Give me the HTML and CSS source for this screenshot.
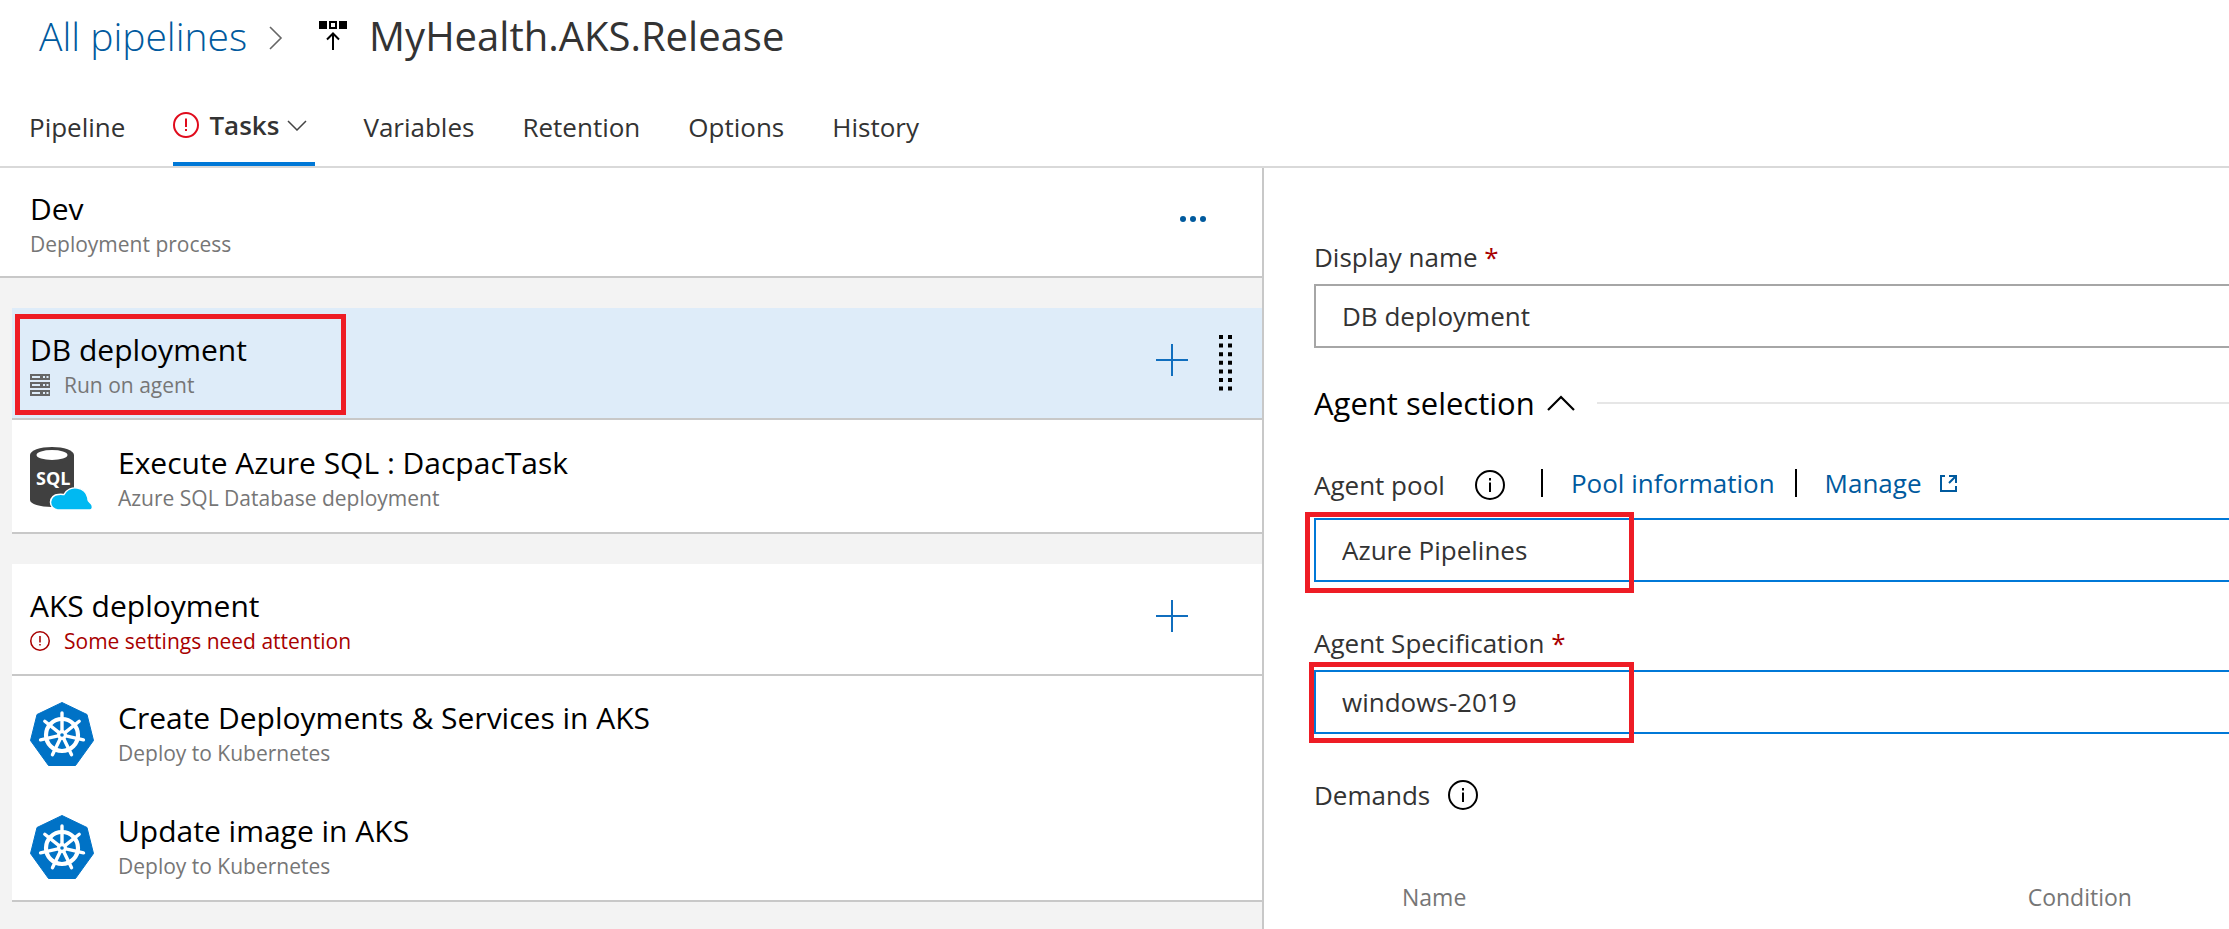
FILE: index.html
```
<!DOCTYPE html>
<html lang="en">
<head>
<meta charset="utf-8">
<title>MyHealth.AKS.Release</title>
<link rel="stylesheet" href="styles.css">
</head>
<body>
<svg class="defs" aria-hidden="true">
  <symbol id="info" viewBox="0 0 30 30"><circle cx="15" cy="15" r="14" fill="none" stroke="currentColor" stroke-width="2"/><path d="M15 12.500V22M15 8v2.500" fill="none" stroke="currentColor" stroke-width="2"/></symbol>
  <symbol id="alert" viewBox="0 0 26 26"><circle cx="13" cy="13" r="12" fill="none" stroke="currentColor" stroke-width="2"/><path d="M13 6.500V15M13 17v2" fill="none" stroke="currentColor" stroke-width="2"/></symbol>
  <symbol id="plus" viewBox="0 0 32 32"><path d="M16 0V32M0 16H32" fill="none" stroke="currentColor" stroke-width="2"/></symbol>
  <symbol id="helm" viewBox="0 0 64 64">
    <path d="M32 0.500 57 12.500 63.500 38.500 45.500 63.500H18.500L.5 38.500 7 12.500Z" fill="#0072c6" stroke="#0072c6" stroke-linejoin="round"/>
    <g fill="none" stroke="#fff" stroke-width="3.400" stroke-linecap="round">
      <circle cx="32" cy="33" r="16" stroke-width="4.200"/>
      <path d="M32 30V11"/>
      <path d="M32 30V11" transform="rotate(51.430 32 33)"/>
      <path d="M32 30V11" transform="rotate(102.860 32 33)"/>
      <path d="M32 30V11" transform="rotate(154.290 32 33)"/>
      <path d="M32 30V11" transform="rotate(205.710 32 33)"/>
      <path d="M32 30V11" transform="rotate(257.140 32 33)"/>
      <path d="M32 30V11" transform="rotate(308.570 32 33)"/>
    </g>
    <circle cx="32" cy="33" r="5" fill="#fff"/><circle cx="32" cy="33" r="1.800" fill="#0072c6"/>
  </symbol>
</svg>
<header class="top">
  <nav class="crumbs" aria-label="Breadcrumb">
    <a class="crumb-link" href="#">All pipelines</a>
    <svg class="crumb-sep" viewBox="0 0 14 24"><path d="M1 1 12 12 1 23" fill="none" stroke="#666" stroke-width="1.600"/></svg>
    <svg class="release-icon" viewBox="0 0 28 30"><path d="M0 0H8V8H0ZM20 0H28V8H20ZM10 0H18V8H10Z"/><path d="M12 2H16V6H12Z" fill="#fff"/><path d="M14 29V13M8 18.500 14 12.500 20 18.500" fill="none" stroke="#000" stroke-width="2"/></svg>
    <h1 class="title">MyHealth.AKS.Release</h1>
  </nav>
  <nav class="tabs" aria-label="Sections">
    <a class="tab" href="#">Pipeline</a>
    <a class="tab tab-active" href="#" aria-current="page"><svg class="tab-alert"><use href="#alert"/></svg>Tasks<svg class="tab-chevron" viewBox="0 0 20 11"><path d="M1 1 10 10 19 1" fill="none" stroke="#444" stroke-width="1.500"/></svg></a>
    <a class="tab" href="#">Variables</a>
    <a class="tab" href="#">Retention</a>
    <a class="tab" href="#">Options</a>
    <a class="tab" href="#">History</a>
  </nav>
</header>
<main class="panes">
  <section class="tasks">
    <div class="row row-process">
      <div class="row-text"><h2 class="name">Dev</h2><p class="sub">Deployment process</p></div>
      <button class="icon-button more" aria-label="More"><svg class="dots" viewBox="0 0 27 6"><circle cx="3" cy="3" r="3"/><circle cx="13" cy="3" r="3"/><circle cx="23" cy="3" r="3"/></svg></button>
    </div>
    <div class="group">
      <div class="row row-selected">
        <div class="row-text"><h2 class="name">DB deployment</h2>
          <p class="sub"><svg class="sub-icon server" viewBox="0 0 20 22"><path d="M0 0H20V6H0ZM0 8H20V14H0ZM0 16H20V22H0Z" fill="#666"/><path d="M2 2H10V4H2ZM2 10H10V12H2ZM2 18H10V20H2ZM13 2H15V4H13ZM13 10H15V12H13ZM13 18H15V20H13ZM16.500 2H18.500V4H16.500ZM16.500 10H18.500V12H16.500ZM16.500 18H18.500V20H16.500Z" fill="#deecf9"/></svg>Run on agent</p></div>
        <button class="icon-button add" aria-label="Add a task to DB deployment"><svg class="plus"><use href="#plus"/></svg></button>
        <svg class="grip" viewBox="0 0 14 56"><path d="M2 0V56M11 0V56" fill="none" stroke="#000" stroke-width="4" stroke-dasharray="4 4.600"/></svg>
        <span class="mark mark-job"></span>
      </div>
      <div class="row row-last">
        <svg class="task-icon" viewBox="0 0 64 64"><path d="M0 8V53C0 57 10 60 22 60S44 57 44 53V8Z" fill="#404040"/><ellipse cx="22" cy="8" rx="22" ry="8" fill="#404040"/><ellipse cx="22" cy="8" rx="15.500" ry="5" fill="#fff"/><text class="sql" x="6" y="38">SQL</text><path d="M28 63A7.500 7.500 0 0 1 28.500 47.500C31 47 33 47.500 34 47.500A13 13 0 0 1 58 51C57 55 61 55 62 58S62 63 60 63Z" fill="#00b9f2" stroke="#fff" stroke-width="1.500"/></svg>
        <div class="row-text"><h3 class="name">Execute Azure SQL : DacpacTask</h3><p class="sub">Azure SQL Database deployment</p></div>
      </div>
    </div>
    <div class="group">
      <div class="row">
        <div class="row-text"><h2 class="name">AKS deployment</h2>
          <p class="sub sub-error"><svg class="sub-icon"><use href="#alert"/></svg>Some settings need attention</p></div>
        <button class="icon-button add add-end" aria-label="Add a task to AKS deployment"><svg class="plus"><use href="#plus"/></svg></button>
      </div>
      <div class="row row-plain">
        <svg class="task-icon"><use href="#helm"/></svg>
        <div class="row-text"><h3 class="name">Create Deployments &amp; Services in AKS</h3><p class="sub">Deploy to Kubernetes</p></div>
      </div>
      <div class="row row-last">
        <svg class="task-icon"><use href="#helm"/></svg>
        <div class="row-text"><h3 class="name">Update image in AKS</h3><p class="sub">Deploy to Kubernetes</p></div>
      </div>
    </div>
  </section>
  <form class="detail">
    <div class="label-line"><label for="display-name">Display name <span class="req">*</span></label></div>
    <div class="field"><input class="box" id="display-name" type="text" value="DB deployment"></div>
    <div class="section-head"><h2 class="section-title">Agent selection</h2><svg class="section-chevron" viewBox="0 0 28 16"><path d="M1 15 14 2 27 15" fill="none" stroke="#000" stroke-width="2.200"/></svg><span class="rule"></span></div>
    <div class="label-line label-pool">
      <label for="pool">Agent pool</label><svg class="info info-pool"><use href="#info"/></svg>
      <span class="links"><span class="bar"></span><a class="link" href="#">Pool information</a><span class="bar"></span><a class="link" href="#">Manage<svg class="external" viewBox="0 0 17 17"><path d="M5 1H1V16H16V11M9 1H16V8M16 1 9 8" fill="none" stroke="currentColor" stroke-width="2"/></svg></a></span>
    </div>
    <div class="field"><select class="box box-active" id="pool"><option>Azure Pipelines</option></select><span class="mark mark-pool"></span></div>
    <div class="label-line label-next"><label for="spec">Agent Specification <span class="req">*</span></label></div>
    <div class="field"><select class="box box-active" id="spec"><option>windows-2019</option></select><span class="mark mark-spec"></span></div>
    <div class="label-line label-next"><span>Demands</span><svg class="info"><use href="#info"/></svg></div>
    <table class="demands"><thead><tr><th class="col-name" scope="col">Name</th><th class="col-condition" scope="col">Condition</th></tr></thead></table>
  </form>
</main>
</body>
</html>
```
FILE: styles.css
```
* { box-sizing: border-box; }
html, body { height: 100%; }
body {
  margin: 0;
  display: flex;
  flex-direction: column;
  overflow: hidden;
  background: #fff;
  color: #333;
  font: 26px/36px "Open Sans", "Noto Sans", sans-serif;
}
h1, h2, h3, p { margin: 0; font-weight: 400; }
a { color: inherit; text-decoration: none; }
svg { display: block; flex: none; }
.defs { width: 0; height: 0; position: absolute; }

.top { border-bottom: 2px solid #d9d9d9; }
.crumbs { display: flex; align-items: center; padding: 8px 39px 0; height: 64px; }
.crumb-link { font-size: 39px; line-height: 56px; font-weight: 300; color: #005a9e; }
.crumb-sep { width: 14px; height: 24px; margin: 4px 36px 0 22px; }
.release-icon { width: 28px; height: 30px; margin-right: 22px; }
.title { font-size: 40px; line-height: 56px; }

.tabs { display: flex; gap: 48px; height: 102px; padding: 0 29px; }
.tab { display: flex; align-items: center; padding-top: 24px; height: 102px; }
.tab-active { font-weight: 600; border-bottom: 4px solid #0078d7; }
.tab-alert { width: 26px; height: 26px; margin-right: 10px; color: #e00b1c; }
.tab-chevron { width: 20px; height: 11px; margin: 0 8px 0 8px; }

.panes { flex: 1; display: grid; grid-template-columns: 1264fr 965fr; min-height: 0; }
.tasks { background: #f3f3f3; border-right: 2px solid #c8c8c8; overflow: hidden; }
.row {
  position: relative;
  display: flex;
  align-items: center;
  min-height: 112px;
  padding-left: 18px;
  background: #fff;
  border-bottom: 2px solid #c8c8c8;
}
.row-process { min-height: 110px; padding-left: 30px; }
.row-selected { background: #deecf9; }
.row-plain { border-bottom-color: #fff; }
.row-last { min-height: 114px; }
.group { margin: 30px 0 0 12px; }
.row-text { flex: 1; padding-top: 4px; }
.name { font-size: 30px; line-height: 40px; color: #000; }
.sub { display: flex; align-items: center; font-size: 21px; line-height: 30px; color: #767676; }
.sub-error { color: #a80000; }
.sub-icon { width: 20px; height: 20px; margin-right: 14px; }
.server { height: 22px; }
.task-icon { width: 64px; height: 64px; margin: 6px 24px 0 0; }
.sql { font: 700 18px "Open Sans", sans-serif; fill: #fff; }
.icon-button { margin: 0; padding: 0; border: 0; background: none; color: #106ebe; }
.more { margin: 0 55px 6px 0; }
.dots { width: 27px; height: 6px; fill: #005a9e; }
.plus { width: 32px; height: 32px; }
.add { margin-bottom: 6px; }
.add-end { margin-right: 74px; }
.grip { width: 14px; height: 56px; margin: 0 29px 0 31px; }

.detail { padding: 66px 0 0 50px; overflow: hidden; min-width: 0; }
.label-line { display: flex; align-items: center; height: 46px; margin-bottom: 4px; }
.label-pool { margin: 4px 0 10px; }
.label-next { margin-top: 38px; }
.req { color: #a80000; }
.field { position: relative; }
.box {
  display: block;
  width: 100%;
  height: 64px;
  padding: 0 0 0 26px;
  border: 2px solid #a6a6a6;
  border-right: 0;
  border-radius: 0;
  background: #fff;
  color: #333;
  font: inherit;
  appearance: none;
  outline: 0;
}
.box-active { border-color: #0078d7; }
.section-head { display: flex; align-items: center; height: 110px; }
.section-title { font-size: 31px; line-height: 40px; color: #000; }
.section-chevron { width: 28px; height: 16px; margin: 0 22px 0 12px; }
.rule { flex: 1; height: 2px; background: #e6e6e6; }
.info { width: 30px; height: 30px; margin-left: 18px; color: #000; }
.info-pool { margin-left: 30px; }
.links { display: flex; align-items: center; margin: 0 0 4px 36px; }
.bar { width: 2px; height: 28px; background: #000; margin-right: 28px; }
.link { display: flex; align-items: center; margin-right: 20px; color: #005a9e; }
.external { width: 17px; height: 17px; margin-left: 18px; }
.demands { width: 100%; margin-top: 64px; border-collapse: collapse; table-layout: fixed; }
.demands th { padding: 0; text-align: left; font-size: 23px; line-height: 30px; font-weight: 400; color: #767676; }
.demands .col-name { width: 78%; padding-left: 88px; }

.mark { position: absolute; border: 5px solid #ee1c25; pointer-events: none; }
.mark-job { left: 3px; top: 6px; width: 331px; height: 101px; }
.mark-pool { left: -9px; top: -6px; width: 329px; height: 81px; }
.mark-spec { left: -5px; top: -8px; width: 325px; height: 81px; }
```
